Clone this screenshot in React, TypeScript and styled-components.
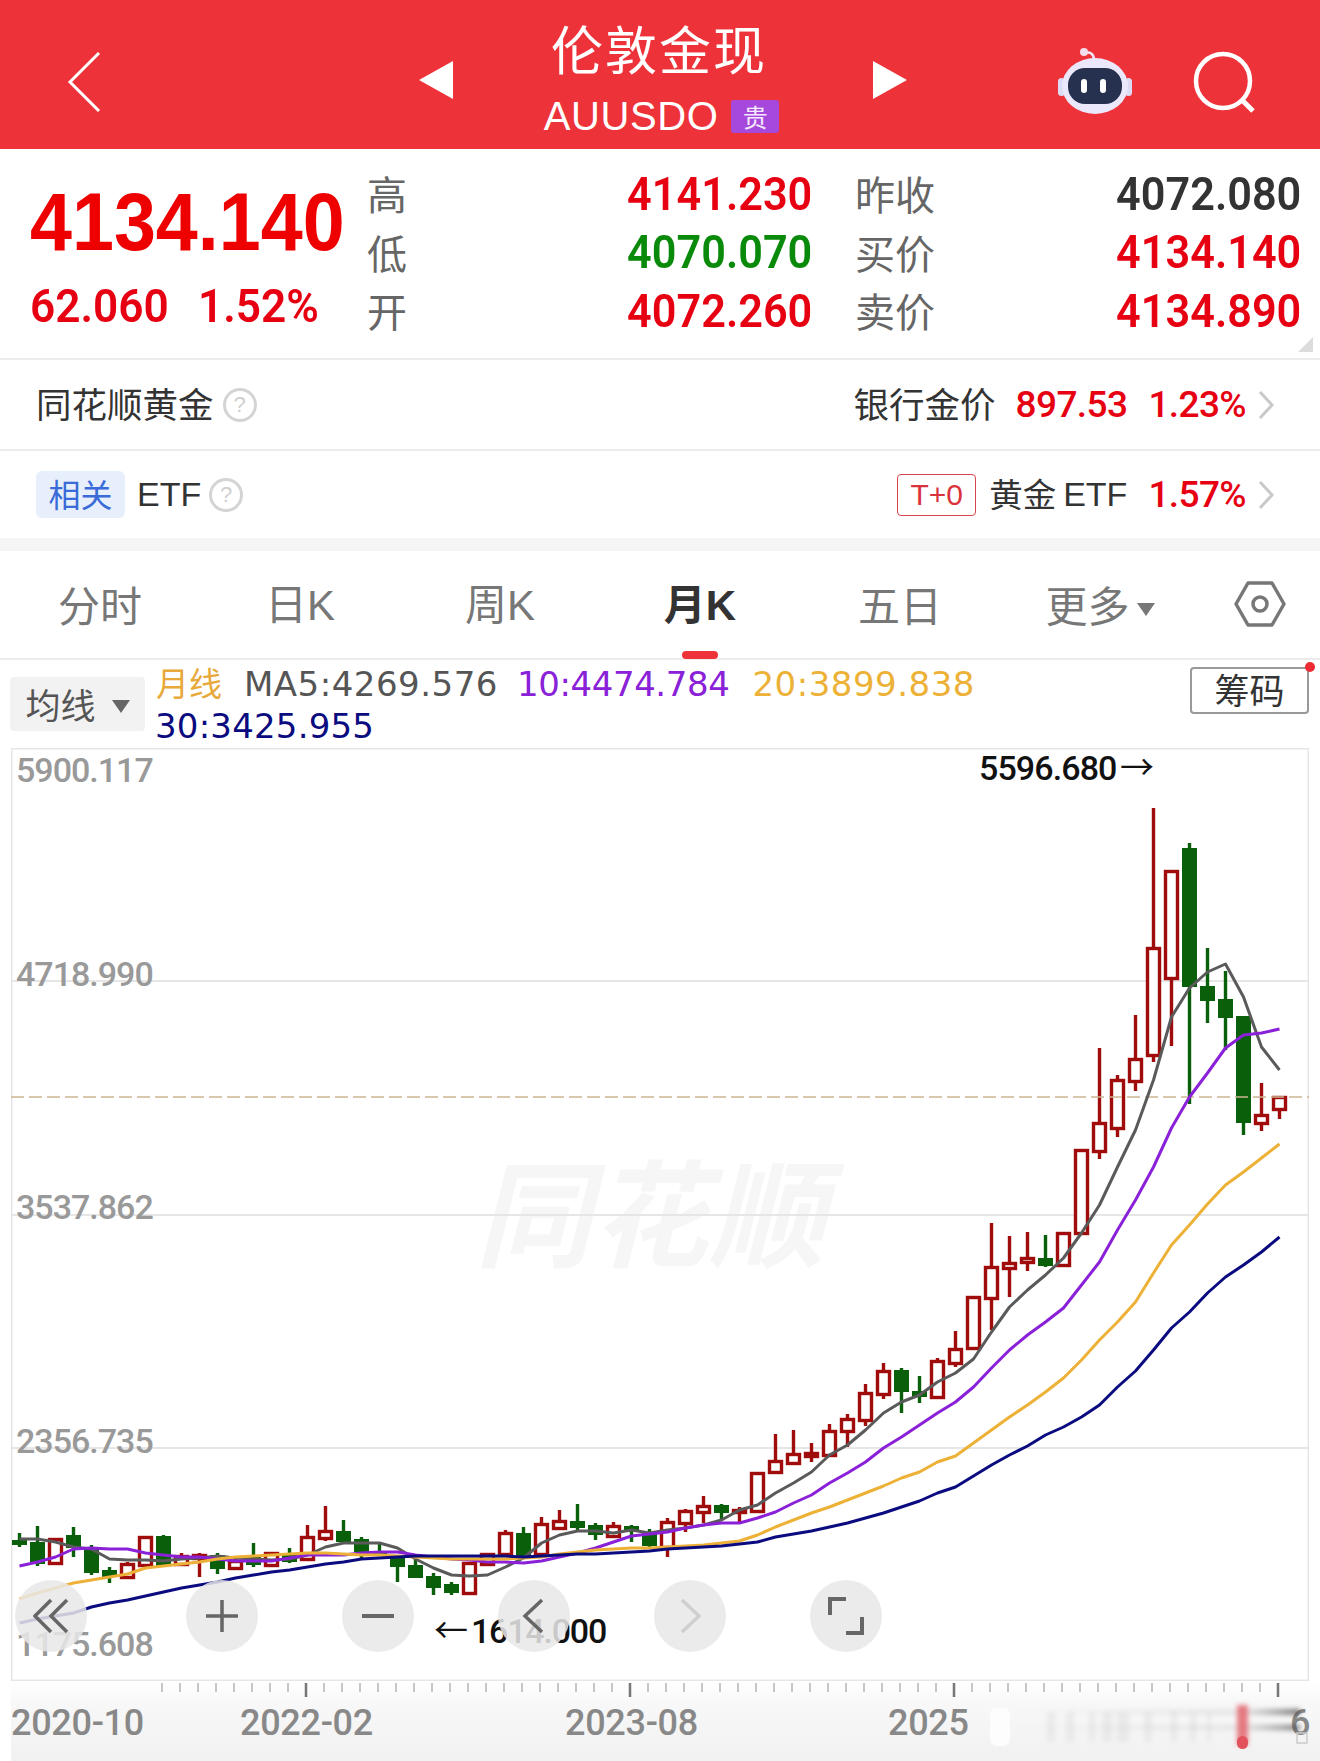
import React from "react";
import styled, { createGlobalStyle } from "styled-components";

const CJK = `"Noto Sans CJK SC", "Noto Sans", sans-serif`;
const NUM = `Roboto, "Noto Sans CJK SC", sans-serif`;
const RED = "#e60012";

const GlobalStyle = createGlobalStyle`
    html, body {
        margin: 0;
        padding: 0;
        background: #fff;
    }
    body {
        font-family: ${CJK};
    }
`;

const Page = styled.div`
    width: 1320px;
    height: 1761px;
    overflow: hidden;
    background: #fff;
`;

// header
const Header = styled.header`
    display: flex;
    align-items: center;
    height: 149px;
    padding-left: 67px;
    background: #ee3239;
    box-sizing: border-box;
`;

const HeaderIcon = styled.svg`
    display: block;
    flex: none;
    margin-left: ${(p) => p.$ml || 0}px;
    margin-top: ${(p) => p.$mt || 0}px;
`;

const TitleBlock = styled.div`
    width: 420px;
    display: flex;
    flex-direction: column;
    align-items: center;
    color: #fff;
`;

const Title = styled.div`
    font-size: 52px;
    line-height: 66px;
    letter-spacing: 2px;
    margin: 5px 8px 0 0;
`;

const SubTitle = styled.div`
    display: flex;
    align-items: center;
    gap: 13px;
    margin-top: 12px;
    margin-right: 3px;
    font-family: "Liberation Sans", sans-serif;
    font-size: 40px;
    line-height: 46px;
    letter-spacing: 0.6px;
`;

const Tag = styled.span`
    display: block;
    width: 48px;
    height: 33px;
    background: #a648dc;
    border-radius: 3px;
    color: #f6e8ff;
    font-family: ${CJK};
    font-size: 25px;
    line-height: 33px;
    letter-spacing: 0;
    text-align: center;
`;

// quote
const Quote = styled.section`
    position: relative;
    display: flex;
    height: 211px;
    border-bottom: 2px solid #ececec;
    box-sizing: border-box;
`;

const PriceCol = styled.div`
    width: 367px;
    padding-left: 30px;
    box-sizing: border-box;
    white-space: nowrap;
`;

const MainPrice = styled.div`
    margin-top: 32px;
    font-family: "Liberation Sans", sans-serif;
    font-weight: 700;
    font-size: 82px;
    line-height: 82px;
    color: #ee0000;
    transform: scaleX(0.92);
    transform-origin: left center;
`;

const ChangeRow = styled.div`
    display: flex;
    gap: 20px;
    margin-top: 18px;
    font-family: ${NUM};
    font-weight: 600;
    font-size: 47px;
    line-height: 50px;
    color: ${RED};
`;

const ChangeNum = styled.span`
    display: block;
    transform: scaleX(0.94);
    transform-origin: left center;
`;

const StatGrid = styled.div`
    display: grid;
    grid-template-columns: 445px 446px;
    grid-auto-rows: 58.5px;
    column-gap: 43px;
    padding-top: 15px;
`;

const Stat = styled.div`
    display: flex;
    justify-content: space-between;
    align-items: center;
`;

const StatLabel = styled.span`
    font-size: 40px;
    color: #666;
`;

const StatValue = styled.span`
    display: block;
    font-family: ${NUM};
    font-weight: 600;
    font-size: 47px;
    color: ${(p) => p.$color};
    transform: scaleX(0.92);
    transform-origin: right center;
`;

const Corner = styled.div`
    position: absolute;
    right: 7px;
    bottom: 6px;
    width: 0;
    height: 0;
    border-left: 15px solid transparent;
    border-bottom: 15px solid #dcdcdc;
`;

// info rows
const InfoRow = styled.div`
    display: flex;
    align-items: center;
    height: ${(p) => p.$h}px;
    padding: 0 46px 0 36px;
    box-sizing: border-box;
    border-bottom: ${(p) => (p.$line ? "2px solid #ececec" : "none")};
`;

const InfoLeft = styled.div`
    display: flex;
    align-items: center;
    font-size: 35.5px;
    color: #333;
`;

const InfoRight = styled.div`
    margin-left: auto;
    display: flex;
    align-items: center;
    font-size: 35.5px;
    color: #333;
`;

const InfoCn = styled.span`
    margin-bottom: 4px;
    font-size: ${(p) => p.$fs || 35.5}px;
`;

const Help = styled.span`
    display: inline-block;
    width: 28px;
    height: 28px;
    margin-left: ${(p) => p.$ml}px;
    border: 3px solid #d4d4d4;
    border-radius: 50%;
    color: #cfcfcf;
    font-family: "Liberation Sans", sans-serif;
    font-size: 22px;
    line-height: 28px;
    text-align: center;
`;

const BlueTag = styled.span`
    display: block;
    width: 89px;
    height: 47px;
    margin-right: 12px;
    background: #e7effc;
    border-radius: 6px;
    color: #3a6bd8;
    font-size: 32px;
    line-height: 45px;
    text-align: center;
`;

const Latin = styled.span`
    font-family: "Liberation Sans", sans-serif;
    font-size: 34px;
    margin-left: ${(p) => p.$ml || 0}px;
`;

const T0 = styled.span`
    display: block;
    width: 79px;
    height: 42px;
    margin-right: 13px;
    border: 1.5px solid #d9434c;
    border-radius: 4px;
    box-sizing: border-box;
    color: #d9333c;
    font-family: "Liberation Sans", sans-serif;
    font-size: 30px;
    line-height: 39px;
    text-align: center;
`;

const RedNum = styled.span`
    margin-left: ${(p) => p.$ml}px;
    font-family: ${NUM};
    font-weight: 500;
    font-size: 37px;
    letter-spacing: -0.6px;
    color: ${RED};
`;

const Chevron = styled.svg`
    display: block;
    margin-left: 12px;
`;

const GapBar = styled.div`
    height: 13px;
    background: #f5f5f5;
`;

// tabs
const Tabs = styled.nav`
    position: relative;
    display: flex;
    align-items: center;
    height: 109px;
    border-bottom: 2px solid #ececec;
    box-sizing: border-box;
    padding-bottom: 2px;
`;

const Tab = styled.div`
    position: relative;
    width: 200px;
    text-align: center;
    font-size: 42px;
    line-height: 56px;
    font-weight: ${(p) => (p.$active ? 700 : 400)};
    color: ${(p) => (p.$active ? "#333" : "#777")};
`;

const TabLatin = styled.span`
    font-family: "Liberation Sans", sans-serif;
`;

const Caret = styled.span`
    display: inline-block;
    width: 0;
    height: 0;
    margin-left: ${(p) => p.$ml || 7}px;
    vertical-align: 6px;
    border-left: 9px solid transparent;
    border-right: 9px solid transparent;
    border-top: 13px solid ${(p) => p.$color || "#777"};
`;

const TabMark = styled.span`
    position: absolute;
    left: 82px;
    bottom: -25px;
    width: 36px;
    height: 8px;
    border-radius: 4px;
    background: #ee3239;
`;

const SettingSlot = styled.div`
    flex: 1;
    display: flex;
    justify-content: center;
`;

// legend
const Legend = styled.div`
    display: flex;
    height: 88px;
    box-sizing: border-box;
`;

const MaSelect = styled.div`
    flex: none;
    width: 135px;
    height: 54px;
    margin: 17px 0 0 10px;
    background: #f2f2f2;
    border-radius: 4px;
    color: #555;
    font-size: 35px;
    line-height: 54px;
    text-align: center;
`;

const MaText = styled.div`
    width: 870px;
    margin-left: 11px;
    padding-top: 1px;
    font-family: "DejaVu Sans", sans-serif;
    font-size: 34px;
    line-height: 42px;
`;

const MaItem = styled.span`
    margin-left: ${(p) => p.$ml || 0}px;
    margin-right: ${(p) => p.$mr ?? 22}px;
    letter-spacing: ${(p) => p.$ls || 0}px;
    color: ${(p) => p.$color};
    white-space: nowrap;
`;

const MaCn = styled.span`
    font-family: ${CJK};
    font-size: 33px;
`;

const ChipBtn = styled.div`
    position: relative;
    flex: none;
    width: 119px;
    height: 47px;
    margin: 7px 0 0 164px;
    border: 2px solid #999;
    border-radius: 4px;
    box-sizing: border-box;
    color: #333;
    font-size: 35px;
    line-height: 40px;
    text-align: center;
`;

const ChipDot = styled.span`
    position: absolute;
    right: -8px;
    top: -7px;
    width: 10px;
    height: 10px;
    border-radius: 50%;
    background: #ee2a33;
`;

// chart
const ChartFrame = styled.div`
    position: relative;
    width: 1298px;
    height: 933px;
    margin-left: 11px;
`;

const ChartSvg = styled.svg`
    display: block;
`;

const Controls = styled.div`
    position: absolute;
    left: 4px;
    top: 832px;
    display: flex;
    gap: 84px;
`;

const CtrlBtn = styled.div`
    width: 72px;
    height: 72px;
    border-radius: 50%;
    background: rgba(232, 232, 232, 0.86);
    display: flex;
    align-items: center;
    justify-content: center;
    &:first-child {
        margin-right: 15px;
    }
`;

const Footer = styled.div`
    margin-left: 11px;
    height: 80px;
    background: linear-gradient(#fff 0, #f8f8f8 22px, #f1f1f1 100%);
`;

type Candle = [number, number, number, number, "r" | "g"];

const candles: Candle[] = [
    [1533, 1540, 1545, 1547, "g"], [1526, 1542, 1564, 1566, "g"], [1538, 1539, 1563, 1564, "r"],
    [1527, 1535, 1548, 1557, "g"], [1545, 1547, 1573, 1575, "g"], [1567, 1570, 1577, 1583, "g"],
    [1562, 1564, 1577, 1578, "r"], [1536, 1537, 1565, 1566, "r"], [1535, 1536, 1566, 1567, "g"],
    [1553, 1556, 1564, 1566, "r"], [1553, 1555, 1558, 1577, "r"], [1553, 1555, 1569, 1574, "g"],
    [1557, 1561, 1568, 1569, "r"], [1543, 1557, 1565, 1567, "g"], [1552, 1553, 1565, 1567, "r"],
    [1548, 1553, 1562, 1563, "g"], [1525, 1537, 1559, 1560, "r"], [1506, 1531, 1538, 1541, "r"],
    [1520, 1531, 1542, 1543, "g"], [1537, 1539, 1552, 1559, "g"], [1543, 1553, 1555, 1556, "g"],
    [1555, 1557, 1567, 1582, "g"], [1560, 1565, 1578, 1578, "g"], [1573, 1576, 1588, 1595, "g"],
    [1582, 1584, 1593, 1595, "g"], [1563, 1563, 1593, 1594, "r"], [1553, 1554, 1564, 1565, "r"],
    [1530, 1533, 1554, 1555, "r"], [1527, 1533, 1556, 1558, "g"], [1517, 1524, 1554, 1555, "r"],
    [1510, 1521, 1528, 1529, "r"], [1504, 1521, 1528, 1530, "g"], [1523, 1525, 1535, 1540, "g"],
    [1522, 1526, 1536, 1538, "r"], [1525, 1526, 1532, 1542, "g"], [1529, 1532, 1546, 1547, "g"],
    [1518, 1522, 1547, 1557, "r"], [1509, 1511, 1523, 1532, "r"], [1496, 1506, 1512, 1523, "r"],
    [1504, 1505, 1513, 1520, "g"], [1507, 1510, 1512, 1523, "r"], [1473, 1473, 1511, 1511, "r"],
    [1434, 1461, 1472, 1473, "r"], [1430, 1454, 1463, 1464, "r"], [1443, 1453, 1456, 1462, "r"],
    [1424, 1431, 1455, 1456, "r"], [1414, 1419, 1431, 1447, "r"], [1384, 1393, 1420, 1426, "r"],
    [1363, 1371, 1394, 1399, "r"], [1368, 1370, 1392, 1413, "g"], [1376, 1391, 1397, 1403, "g"],
    [1358, 1361, 1397, 1397, "r"], [1331, 1349, 1363, 1367, "r"], [1297, 1297, 1348, 1348, "r"],
    [1223, 1267, 1298, 1330, "r"], [1236, 1263, 1268, 1297, "r"], [1232, 1258, 1262, 1271, "r"],
    [1235, 1258, 1266, 1267, "g"], [1232, 1233, 1265, 1266, "r"], [1149, 1150, 1233, 1235, "r"],
    [1048, 1123, 1151, 1159, "r"], [1075, 1080, 1128, 1137, "r"], [1015, 1059, 1081, 1091, "r"],
    [808, 948, 1055, 1062, "r"], [870, 871, 978, 1046, "r"], [843, 848, 987, 1104, "g"],
    [948, 986, 1001, 1023, "g"], [971, 999, 1018, 1050, "g"], [1016, 1016, 1123, 1135, "g"],
    [1083, 1115, 1123, 1131, "r"], [1096, 1097, 1109, 1119, "r"],
];

const ma5 = [
    1539, 1539, 1542, 1547, 1549, 1559, 1560, 1560, 1561, 1559, 1558, 1556, 1558, 1559, 1560, 1559, 1555, 1547,
    1543, 1543, 1543, 1548, 1559, 1568, 1575, 1576, 1575, 1567, 1558, 1543, 1535, 1531, 1531, 1533, 1530, 1533,
    1530, 1528, 1525, 1520, 1510, 1505, 1493, 1483, 1472, 1455, 1445, 1430, 1413, 1402, 1395, 1382, 1373, 1359,
    1332, 1307, 1290, 1275, 1258, 1233, 1205, 1167, 1130, 1080, 1017, 988, 972, 964, 997, 1047, 1070,
];

const ma10 = [
    1566, 1562, 1557, 1549, 1548, 1549, 1549, 1553, 1555, 1557, 1557, 1559, 1561, 1561, 1561, 1558, 1555, 1555,
    1555, 1553, 1552, 1552, 1555, 1557, 1559, 1560, 1562, 1562, 1563, 1561, 1557, 1553, 1548, 1542, 1536, 1534,
    1532, 1528, 1525, 1523, 1523, 1518, 1512, 1503, 1495, 1483, 1473, 1462, 1448, 1437, 1425, 1413, 1402, 1387,
    1368, 1350, 1335, 1322, 1308, 1285, 1262, 1230, 1200, 1167, 1128, 1097, 1073, 1048, 1035, 1033, 1029,
];

const ma20 = [
    1599, 1593, 1588, 1583, 1580, 1577, 1574, 1568, 1566, 1564, 1562, 1559, 1557, 1556, 1555, 1554, 1553, 1553,
    1554, 1555, 1555, 1556, 1557, 1558, 1559, 1559, 1559, 1559, 1558, 1557, 1554, 1552, 1550, 1549, 1548, 1548,
    1547, 1546, 1545, 1543, 1541, 1535, 1527, 1520, 1513, 1507, 1500, 1493, 1486, 1478, 1472, 1462, 1456, 1443,
    1430, 1417, 1405, 1392, 1378, 1360, 1340, 1322, 1302, 1273, 1245, 1225, 1204, 1185, 1172, 1158, 1144,
];

const ma30 = [
    1623, 1619, 1616, 1613, 1607, 1603, 1600, 1596, 1592, 1588, 1585, 1582, 1578, 1575, 1572, 1570, 1567, 1564,
    1562, 1559, 1558, 1557, 1556, 1556, 1556, 1556, 1556, 1556, 1557, 1556, 1555, 1554, 1554, 1553, 1552, 1551,
    1549, 1548, 1547, 1546, 1544, 1542, 1537, 1534, 1531, 1527, 1523, 1518, 1513, 1507, 1501, 1493, 1487, 1476,
    1465, 1455, 1446, 1435, 1427, 1417, 1405, 1387, 1371, 1350, 1328, 1312, 1293, 1277, 1265, 1252, 1237,
];

const candleX = (i: number) => 19.5 + 18 * i;
const toPoints = (ys: number[]) => ys.map((y, i) => `${candleX(i)},${y}`).join(" ");

const priceLabels: [string, number][] = [
    ["5900.117", 782],
    ["4718.990", 986],
    ["3537.862", 1219],
    ["2356.735", 1453],
    ["1175.608", 1656],
];

const KChart = () => (
    <ChartSvg width="1298" height="933" viewBox="11 748 1298 933">
        <rect x="11.5" y="748.5" width="1297" height="932" fill="#fff" stroke="#e6e6e6" strokeWidth="2" />
        <text
            x="475"
            y="1258"
            fontFamily={CJK}
            fontWeight="700"
            fontSize="116"
            fontStyle="italic"
            fill="#f6f6f6"
            letterSpacing="1"
        >
            同花顺
        </text>
        {[981, 1215, 1448].map((y) => (
            <line key={y} x1="11" x2="1309" y1={y} y2={y} stroke="#e6e6e6" strokeWidth="2" />
        ))}
        {candles.map(([high, top, bottom, low, kind], i) => {
            const x = candleX(i);
            const color = kind === "r" ? "#a00c0c" : "#0a600a";
            return (
                <g key={i}>
                    <line x1={x} x2={x} y1={high} y2={low} stroke={color} strokeWidth="3.4" />
                    {kind === "r" ? (
                        <rect x={x - 6} y={top + 0.5} width="12" height={bottom - top} fill="#fff" stroke={color} strokeWidth="3.4" />
                    ) : (
                        <rect x={x - 7.5} y={top} width="15" height={bottom - top} fill={color} />
                    )}
                </g>
            );
        })}
        <line x1="11" x2="1309" y1="1097" y2="1097" stroke="#ccb592" strokeWidth="1.5" strokeDasharray="13 5" />
        <polyline points={toPoints(ma5)} fill="none" stroke="#5a5a5a" strokeWidth="3" strokeLinejoin="round" />
        <polyline points={toPoints(ma10)} fill="none" stroke="#8a20d8" strokeWidth="3" strokeLinejoin="round" />
        <polyline points={toPoints(ma20)} fill="none" stroke="#ecb136" strokeWidth="3" strokeLinejoin="round" />
        <polyline points={toPoints(ma30)} fill="none" stroke="#0b0b80" strokeWidth="3" strokeLinejoin="round" />
        {priceLabels.map(([label, y]) => (
            <text key={label} x="16" y={y} fontFamily={NUM} fontWeight="500" fontSize="34" letterSpacing="-1" fill="#999">
                {label}
            </text>
        ))}
        <text x="979" y="780" fontFamily={NUM} fontWeight="500" fontSize="34" letterSpacing="-0.9" fill="#111">
            5596.680
        </text>
        <text x="1120" y="780" fontFamily={CJK} fontSize="34" fill="#111">→</text>
        <text x="434" y="1643" fontFamily={CJK} fontSize="34" fill="#111">←</text>
        <text x="471" y="1643" fontFamily={NUM} fontWeight="500" fontSize="34" letterSpacing="-1.2" fill="#111">
            1614.000
        </text>
    </ChartSvg>
);

const ticks = Array.from({ length: 63 }, (_, i) => 162 + 18 * i);

const blurBars = [
    [1047, 8], [1066, 8], [1089, 6], [1102, 10], [1117, 12], [1144, 8], [1171, 6], [1190, 6], [1207, 4],
];

const AxisStrip = () => (
    <ChartSvg width="1309" height="80" viewBox="11 1681 1309 80">
        <defs>
            <filter id="soft" x="-50%" y="-50%" width="200%" height="200%">
                <feGaussianBlur stdDeviation="2.5" />
            </filter>
            <linearGradient id="streak" x1="0" x2="1" y1="0" y2="0">
                <stop offset="0" stopColor="#aaa" stopOpacity="0" />
                <stop offset="0.8" stopColor="#999" stopOpacity="0.2" />
                <stop offset="1" stopColor="#444" stopOpacity="0.75" />
            </linearGradient>
        </defs>
        {ticks.map((x, i) => {
            const major = (i + 10) % 18 === 0;
            return (
                <line
                    key={i}
                    x1={x}
                    x2={x}
                    y1="1683"
                    y2={major ? 1697 : 1692}
                    stroke={major ? "#777" : "#b5b5b5"}
                    strokeWidth={major ? 2.5 : 1.5}
                />
            );
        })}
        {[
            ["2020-10", 11],
            ["2022-02", 240],
            ["2023-08", 565],
            ["2025", 888],
        ].map(([label, x]) => (
            <text key={label} x={x} y="1735" fontFamily={NUM} fontWeight="500" fontSize="36" letterSpacing="-0.3" fill="#888">
                {label}
            </text>
        ))}
        <text x="1290" y="1735" fontFamily={NUM} fontWeight="500" fontSize="36" fill="#888">6</text>
        <g filter="url(#soft)">
            {blurBars.map(([x, w]) => (
                <rect key={x} x={x} y="1712" width={w} height="30" fill="#ddd" opacity="0.5" />
            ))}
            <rect x="1010" y="1709" width="290" height="6" fill="url(#streak)" />
            <rect x="1010" y="1725" width="290" height="5" fill="url(#streak)" />
            <rect x="1237" y="1705" width="11" height="40" fill="#e2525c" opacity="0.75" />
        </g>
        <rect x="990" y="1708" width="20" height="38" rx="7" fill="#fdfdfd" />
        <rect x="1237" y="1736" width="11" height="13" rx="5.5" fill="#e2525c" />
        <rect x="1297" y="1733" width="10" height="10" fill="none" stroke="#ccc" strokeWidth="1.5" />
    </ChartSvg>
);

const App = () => (
    <Page>
        <GlobalStyle />
        <Header>
            <HeaderIcon width="34" height="60" viewBox="0 0 34 60" $mt={14}>
                <path d="M32 1 L3 30 L32 59" fill="none" stroke="#fff" strokeWidth="3" />
            </HeaderIcon>
            <HeaderIcon width="34" height="38" viewBox="0 0 34 38" $ml={318} $mt={11}>
                <path d="M0 19 L34 0 V38 Z" fill="#fff" />
            </HeaderIcon>
            <TitleBlock>
                <Title>伦敦金现</Title>
                <SubTitle>
                    AUUSDO
                    <Tag>贵</Tag>
                </SubTitle>
            </TitleBlock>
            <HeaderIcon width="34" height="38" viewBox="0 0 34 38" $mt={11}>
                <path d="M34 19 L0 0 V38 Z" fill="#fff" />
            </HeaderIcon>
            <HeaderIcon width="76" height="68" viewBox="0 0 76 68" $ml={150} $mt={14}>
                <path d="M28 5 Q36 3 37 11" fill="none" stroke="#efe6f8" strokeWidth="2.5" />
                <circle cx="27" cy="4" r="4" fill="#f3dcec" />
                <rect x="1" y="30" width="7" height="18" rx="3.5" fill="#dcdbf6" />
                <rect x="68" y="30" width="7" height="18" rx="3.5" fill="#dcdbf6" />
                <ellipse cx="38" cy="38" rx="33" ry="28" fill="#ebe8fb" />
                <rect x="11" y="20" width="54" height="36" rx="17" fill="#26304f" />
                <rect x="24" y="31" width="6" height="14" rx="3" fill="#fff" />
                <rect x="43" y="31" width="6" height="14" rx="3" fill="#fff" />
            </HeaderIcon>
            <HeaderIcon width="64" height="66" viewBox="0 0 64 66" $ml={60} $mt={18}>
                <circle cx="30" cy="30" r="27" fill="none" stroke="#fff" strokeWidth="4.5" />
                <path d="M49 49 L60 60" fill="none" stroke="#fff" strokeWidth="5" />
            </HeaderIcon>
        </Header>

        <Quote>
            <PriceCol>
                <MainPrice>4134.140</MainPrice>
                <ChangeRow>
                    <ChangeNum>62.060</ChangeNum>
                    <ChangeNum>1.52%</ChangeNum>
                </ChangeRow>
            </PriceCol>
            <StatGrid>
                <Stat>
                    <StatLabel>高</StatLabel>
                    <StatValue $color={RED}>4141.230</StatValue>
                </Stat>
                <Stat>
                    <StatLabel>昨收</StatLabel>
                    <StatValue $color="#333">4072.080</StatValue>
                </Stat>
                <Stat>
                    <StatLabel>低</StatLabel>
                    <StatValue $color="#0a8a0a">4070.070</StatValue>
                </Stat>
                <Stat>
                    <StatLabel>买价</StatLabel>
                    <StatValue $color={RED}>4134.140</StatValue>
                </Stat>
                <Stat>
                    <StatLabel>开</StatLabel>
                    <StatValue $color={RED}>4072.260</StatValue>
                </Stat>
                <Stat>
                    <StatLabel>卖价</StatLabel>
                    <StatValue $color={RED}>4134.890</StatValue>
                </Stat>
            </StatGrid>
            <Corner />
        </Quote>

        <InfoRow $h={91} $line>
            <InfoLeft>
                <InfoCn>同花顺黄金</InfoCn>
                <Help $ml={9}>?</Help>
            </InfoLeft>
            <InfoRight>
                <InfoCn>银行金价</InfoCn>
                <RedNum $ml={20}>897.53</RedNum>
                <RedNum $ml={21}>1.23%</RedNum>
                <Chevron width="16" height="30" viewBox="0 0 16 30">
                    <path d="M2 2 L14 15 L2 28" fill="none" stroke="#c9c9c9" strokeWidth="3" />
                </Chevron>
            </InfoRight>
        </InfoRow>
        <InfoRow $h={87}>
            <InfoLeft>
                <BlueTag>相关</BlueTag>
                <Latin>ETF</Latin>
                <Help $ml={8}>?</Help>
            </InfoLeft>
            <InfoRight>
                <T0>T+0</T0>
                <InfoCn $fs={33.5}>黄金</InfoCn>
                <Latin $ml={7}>ETF</Latin>
                <RedNum $ml={21}>1.57%</RedNum>
                <Chevron width="16" height="30" viewBox="0 0 16 30">
                    <path d="M2 2 L14 15 L2 28" fill="none" stroke="#c9c9c9" strokeWidth="3" />
                </Chevron>
            </InfoRight>
        </InfoRow>
        <GapBar />

        <Tabs>
            <Tab>分时</Tab>
            <Tab>
                日<TabLatin>K</TabLatin>
            </Tab>
            <Tab>
                周<TabLatin>K</TabLatin>
            </Tab>
            <Tab $active>
                月<TabLatin>K</TabLatin>
                <TabMark />
            </Tab>
            <Tab>五日</Tab>
            <Tab>
                更多
                <Caret />
            </Tab>
            <SettingSlot>
                <svg width="52" height="46" viewBox="0 0 52 46">
                    <path d="M14 2 H38 L50 23 L38 44 H14 L2 23 Z" fill="none" stroke="#777" strokeWidth="3.5" strokeLinejoin="round" />
                    <circle cx="26" cy="23" r="7" fill="none" stroke="#777" strokeWidth="3.5" />
                </svg>
            </SettingSlot>
        </Tabs>

        <Legend>
            <MaSelect>
                均线
                <Caret $color="#666" $ml={16} />
            </MaSelect>
            <MaText>
                <MaItem $color="#e8a93a">
                    <MaCn>月线</MaCn>
                </MaItem>
                <MaItem $color="#555" $ls={0.5} $mr={19}>MA5:4269.576</MaItem>
                <MaItem $color="#8a20d8" $ls={-0.4} $mr={23}>10:4474.784</MaItem>
                <MaItem $color="#ecb136" $ls={0.5} $mr={0}>20:3899.838</MaItem>
                <br />
                <MaItem $color="#0b0b80" $ls={0.2} $ml={-1}>30:3425.955</MaItem>
            </MaText>
            <ChipBtn>
                筹码
                <ChipDot />
            </ChipBtn>
        </Legend>

        <ChartFrame>
            <KChart />
            <Controls>
                <CtrlBtn>
                    <svg width="36" height="36" viewBox="0 0 36 36">
                        <path d="M18 2 L2 18 L18 34 M34 2 L18 18 L34 34" fill="none" stroke="#666" strokeWidth="3.5" />
                    </svg>
                </CtrlBtn>
                <CtrlBtn>
                    <svg width="36" height="36" viewBox="0 0 36 36">
                        <path d="M2 18 H34 M18 2 V34" fill="none" stroke="#666" strokeWidth="3.5" />
                    </svg>
                </CtrlBtn>
                <CtrlBtn>
                    <svg width="36" height="36" viewBox="0 0 36 36">
                        <path d="M2 18 H34" fill="none" stroke="#666" strokeWidth="4" />
                    </svg>
                </CtrlBtn>
                <CtrlBtn>
                    <svg width="36" height="36" viewBox="0 0 36 36">
                        <path d="M26 2 L9 18 L26 34" fill="none" stroke="#666" strokeWidth="3.5" />
                    </svg>
                </CtrlBtn>
                <CtrlBtn>
                    <svg width="36" height="36" viewBox="0 0 36 36">
                        <path d="M10 2 L27 18 L10 34" fill="none" stroke="#cfcfcf" strokeWidth="3.5" />
                    </svg>
                </CtrlBtn>
                <CtrlBtn>
                    <svg width="36" height="38" viewBox="0 0 36 38">
                        <path d="M2 18 V2 H18 M34 20 V36 H18" fill="none" stroke="#666" strokeWidth="4" />
                    </svg>
                </CtrlBtn>
            </Controls>
        </ChartFrame>

        <Footer>
            <AxisStrip />
        </Footer>
    </Page>
);

export default App;
